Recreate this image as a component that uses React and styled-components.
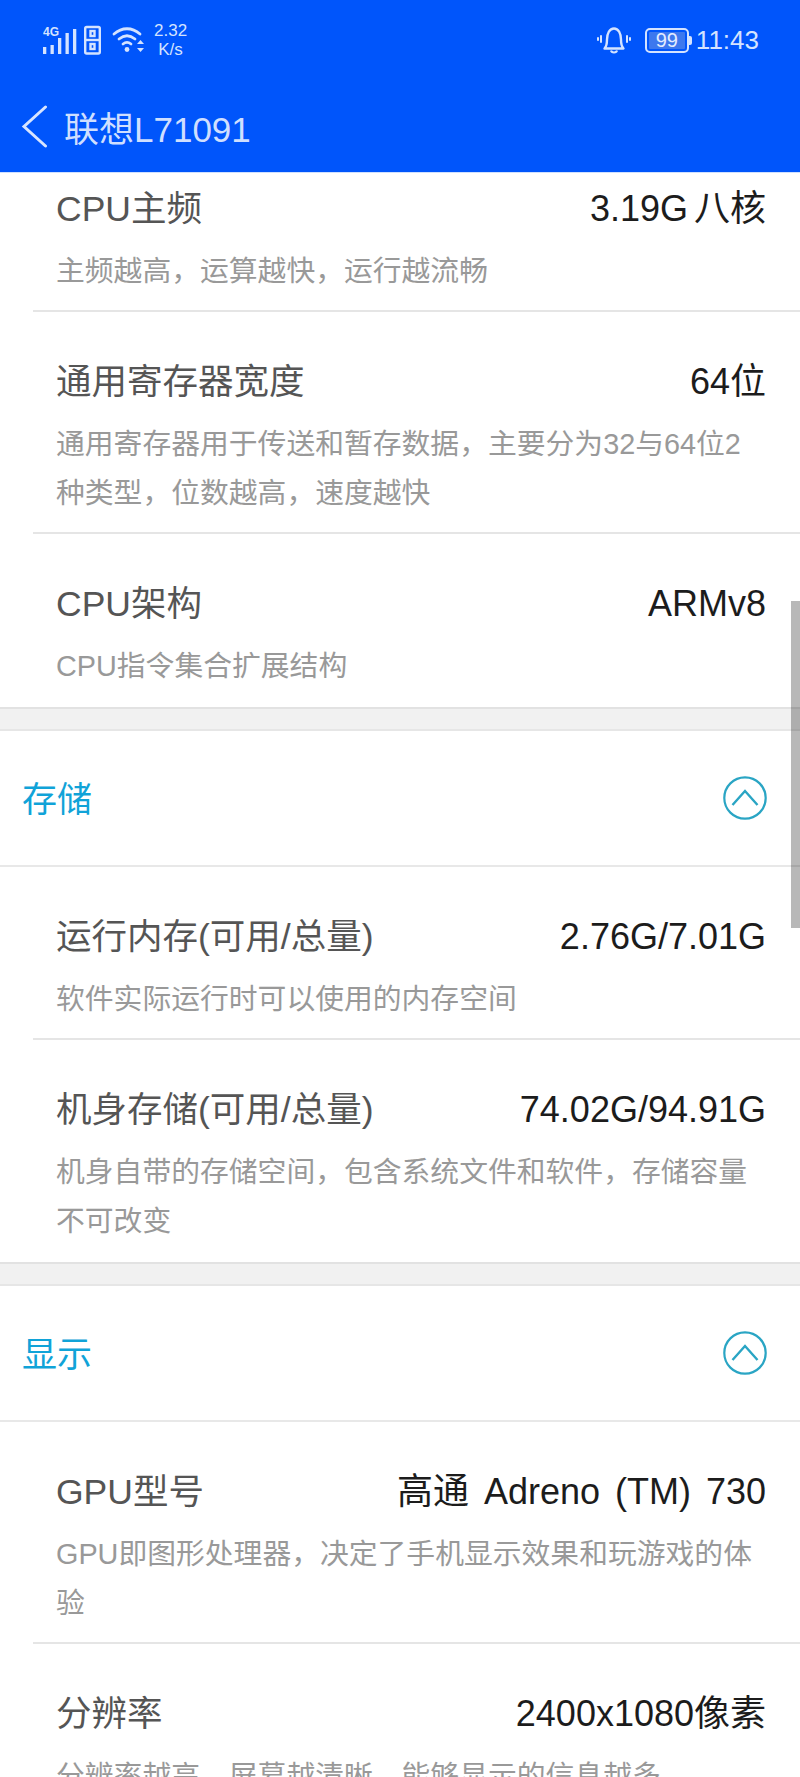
import React from "react";
import styled, { createGlobalStyle } from "styled-components";

const GlobalStyle = createGlobalStyle`
  html, body {
    margin: 0;
    padding: 0;
    background: #fff;
    overflow: hidden;
  }
  * {
    box-sizing: border-box;
  }
`;

const Page = styled.div`
  position: relative;
  width: 800px;
  height: 1777px;
  overflow: hidden;
  display: flex;
  flex-direction: column;
  background: #fff;
  font-family: "Liberation Sans", "Noto Sans CJK SC", sans-serif;
`;

const Header = styled.div`
  flex: none;
  height: 173px;
  background: #0055fb;
  border-bottom: 1px solid #cfe0ff;
  display: flex;
  flex-direction: column;
`;

const StatusBar = styled.div`
  height: 80px;
  padding: 0 41px 0 43px;
  display: flex;
  align-items: center;
  justify-content: space-between;
  color: #d4e3ff;
`;

const StatusGroup = styled.div`
  display: flex;
  align-items: center;
`;

const Speed = styled.div`
  margin-left: 9px;
  font-size: 17px;
  line-height: 19px;
  text-align: center;
`;

const Clock = styled.span`
  margin-left: 7px;
  font-size: 26px;
  line-height: 30px;
`;

const TitleBar = styled.div`
  height: 92px;
  padding-left: 21px;
  display: flex;
  align-items: center;
  color: #cfdfff;
  font-size: 35px;
  line-height: 44px;
`;

const TitleText = styled.span`
  margin: 7px 0 0 16px;
`;

const Scroller = styled.div`
  flex: 1;
  overflow: hidden;
`;

const Content = styled.div`
  margin-top: -34px;
`;

const Band = styled.div`
  height: 24px;
  background: #f1f1f1;
  border-top: 2px solid #e2e2e2;
  border-bottom: 2px solid #e6e6e6;
`;

const SectionHead = styled.div`
  height: 136px;
  padding: 0 33px 0 22px;
  display: flex;
  align-items: center;
  justify-content: space-between;
  border-bottom: 2px solid #e8e8e8;
  color: #10a3d8;
  font-size: 35px;
`;

const SectionTitle = styled.span`
  margin-bottom: 4px;
`;

const Row = styled.div`
  margin-left: 33px;
  padding: 48px 34px ${(p) => (p.$last ? "16px" : "14px")} 23px;
  border-bottom: ${(p) => (p.$last ? "none" : "2px solid #e5e5e5")};
`;

const RowTop = styled.div`
  display: flex;
  justify-content: space-between;
  align-items: baseline;
  line-height: 44px;
  white-space: nowrap;
`;

const Name = styled.span`
  color: #555;
  font-size: 35.5px;
`;

const Value = styled.span`
  color: #1c1c1c;
  font-size: 36px;
  word-spacing: ${(p) => p.$spread || 0}px;
`;

const Desc = styled.div`
  margin-top: 16px;
  color: #999;
  font-size: 28.8px;
  line-height: 49px;
`;

const ScrollThumb = styled.div`
  position: absolute;
  top: 601px;
  right: 0;
  width: 9px;
  height: 327px;
  background: rgba(0, 0, 0, 0.28);
`;

const sections = [
  {
    rows: [
      { name: "CPU主频", value: "3.19G 八核", spread: -4, desc: "主频越高，运算越快，运行越流畅" },
      {
        name: "通用寄存器宽度",
        value: "64位",
        desc: "通用寄存器用于传送和暂存数据，主要分为32与64位2种类型，位数越高，速度越快",
      },
      { name: "CPU架构", value: "ARMv8", desc: "CPU指令集合扩展结构" },
    ],
  },
  {
    title: "存储",
    rows: [
      { name: "运行内存(可用/总量)", value: "2.76G/7.01G", desc: "软件实际运行时可以使用的内存空间" },
      {
        name: "机身存储(可用/总量)",
        value: "74.02G/94.91G",
        desc: "机身自带的存储空间，包含系统文件和软件，存储容量不可改变",
      },
    ],
  },
  {
    title: "显示",
    rows: [
      {
        name: "GPU型号",
        value: "高通 Adreno (TM) 730",
        spread: 5,
        desc: "GPU即图形处理器，决定了手机显示效果和玩游戏的体验",
      },
      { name: "分辨率", value: "2400x1080像素", desc: "分辨率越高，屏幕越清晰，能够显示的信息越多" },
    ],
  },
];

const SignalIcon = () => (
  <svg width="58" height="32" viewBox="0 0 58 32" fill="none">
    <text x="0" y="12" fontSize="12" fontWeight="700" fill="#d4e3ff" fontFamily="Liberation Sans">
      4G
    </text>
    <g fill="#d4e3ff">
      <rect x="0" y="23" width="3.300" height="7" />
      <rect x="7.500" y="21" width="3.300" height="9" />
      <rect x="15" y="14" width="3.300" height="16" />
      <rect x="22.500" y="9" width="3.300" height="21" />
      <rect x="30" y="5" width="3.300" height="25" />
    </g>
    <g stroke="#d4e3ff" strokeWidth="2.400">
      <rect x="42.200" y="3" width="14.600" height="26.500" rx="1.500" />
      <path d="M42 16h15" />
      <rect x="47.500" y="7" width="4" height="5" />
      <rect x="47.500" y="20" width="4" height="5" />
    </g>
  </svg>
);

const WifiIcon = () => (
  <svg width="33" height="26" viewBox="0 0 33 26" fill="none" style={{ marginLeft: 11 }}>
    <g stroke="#d4e3ff" strokeWidth="2.800" strokeLinecap="round">
      <path d="M2 7C10 0 20 0 28 7" />
      <path d="M7 12C12 8 18 8 23 12" />
      <path d="M11 17C13.500 15 16.500 15 19 17" />
    </g>
    <circle cx="15" cy="22.500" r="2.400" fill="#d4e3ff" />
    <path d="M28.500 13l3.500 4h-7zM28.500 25l3.500-4h-7z" fill="#d4e3ff" />
  </svg>
);

const BellIcon = () => (
  <svg width="34" height="28" viewBox="0 0 34 28" fill="none">
    <path
      d="M7.500 22.500c2-2 2.500-4 2.500-9 0-6 2.500-11 7-11s7 5 7 11c0 5 .5 7 2.500 9z"
      stroke="#d4e3ff"
      strokeWidth="2.400"
      strokeLinejoin="round"
    />
    <path d="M14 24.500c.5 2.500 5.500 2.500 6 0" stroke="#d4e3ff" strokeWidth="2" />
    <path
      d="M4 10v6M1 12v2M30 10v6M33 12v2"
      stroke="#d4e3ff"
      strokeWidth="2"
      strokeLinecap="round"
    />
  </svg>
);

const BatteryBox = styled.div`
  position: relative;
  width: 44px;
  height: 25px;
  margin-left: 14px;
  padding: 2px;
  border: 2px solid #d4e3ff;
  border-radius: 5px;
  background: #3d78ee content-box;
  display: flex;
  align-items: center;
  justify-content: center;
  font-size: 20px;
  color: #e4edff;
  &::after {
    content: "";
    position: absolute;
    right: -5px;
    top: 6px;
    width: 3px;
    height: 9px;
    background: #d4e3ff;
    border-radius: 0 2px 2px 0;
  }
`;

const BackIcon = () => (
  <svg width="27" height="43" viewBox="0 0 27 43" fill="none">
    <path d="M24.500 2L3 21.500 24.500 41" stroke="#d8e5ff" strokeWidth="3" strokeLinecap="round" />
  </svg>
);

const CollapseIcon = () => (
  <svg width="44" height="44" viewBox="0 0 44 44" fill="none">
    <circle cx="22" cy="22" r="20.700" stroke="#2aa5c4" strokeWidth="2.200" />
    <path d="M9.500 29L22 15l12.500 14" stroke="#2aa5c4" strokeWidth="2.400" />
  </svg>
);

export default function App() {
  return (
    <>
      <GlobalStyle />
      <Page>
        <Header>
          <StatusBar>
            <StatusGroup>
              <SignalIcon />
              <WifiIcon />
              <Speed>
                2.32
                <br />
                K/s
              </Speed>
            </StatusGroup>
            <StatusGroup>
              <BellIcon />
              <BatteryBox>99</BatteryBox>
              <Clock>11:43</Clock>
            </StatusGroup>
          </StatusBar>
          <TitleBar>
            <BackIcon />
            <TitleText>联想L71091</TitleText>
          </TitleBar>
        </Header>
        <Scroller>
          <Content>
            {sections.map((section, i) => (
              <div key={i}>
                {section.title && (
                  <>
                    <Band />
                    <SectionHead>
                      <SectionTitle>{section.title}</SectionTitle>
                      <CollapseIcon />
                    </SectionHead>
                  </>
                )}
                {section.rows.map((row, j) => (
                  <Row key={row.name} $last={j === section.rows.length - 1 && i < sections.length - 1}>
                    <RowTop>
                      <Name>{row.name}</Name>
                      <Value $spread={row.spread}>{row.value}</Value>
                    </RowTop>
                    <Desc>{row.desc}</Desc>
                  </Row>
                ))}
              </div>
            ))}
          </Content>
        </Scroller>
        <ScrollThumb />
      </Page>
    </>
  );
}
